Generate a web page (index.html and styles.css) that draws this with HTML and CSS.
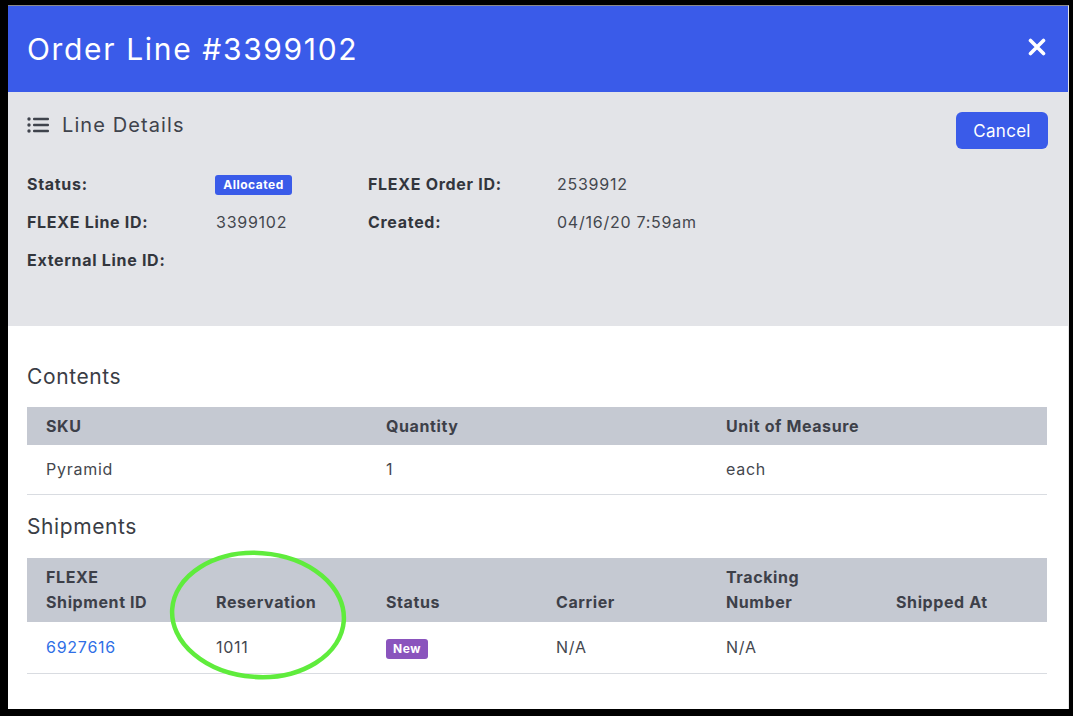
FILE: index.html
```html
<!DOCTYPE html>
<html lang="en">
<head>
  <meta charset="UTF-8" />
  <title>Order Line #3399102</title>
  <link rel="stylesheet" href="styles.css">
</head>
<body>
  <div class="frame">
    <div class="modal">
      <div class="modal-header">
        <h1>Order Line #3399102</h1>
        <button class="close" aria-label="Close">
          <svg width="18" height="18" viewBox="0 0 18 18">
            <path d="M2.5 2.5 L15.5 15.5 M15.5 2.5 L2.5 15.5" stroke="#fff" stroke-width="3.6" stroke-linecap="round"/>
          </svg>
        </button>
      </div>

      <div class="details">
        <div class="details-top">
          <h2 class="details-title">
            <svg width="22" height="16" viewBox="0 0 22 16">
              <circle cx="2" cy="2" r="1.7" fill="#3f434c"/>
              <circle cx="2" cy="8" r="1.7" fill="#3f434c"/>
              <circle cx="2" cy="14" r="1.7" fill="#3f434c"/>
              <rect x="6" y="0.8" width="16" height="2.4" rx="1" fill="#3f434c"/>
              <rect x="6" y="6.8" width="16" height="2.4" rx="1" fill="#3f434c"/>
              <rect x="6" y="12.8" width="16" height="2.4" rx="1" fill="#3f434c"/>
            </svg>
            Line Details
          </h2>
          <button class="btn">Cancel</button>
        </div>

        <div class="detail-grid">
          <div class="label">Status:</div>
          <div class="value"><span class="badge badge-blue">Allocated</span></div>
          <div class="label">FLEXE Order ID:</div>
          <div class="value">2539912</div>

          <div class="label">FLEXE Line ID:</div>
          <div class="value">3399102</div>
          <div class="label">Created:</div>
          <div class="value">04/16/20 7:59am</div>

          <div class="label">External Line ID:</div>
          <div class="value"></div>
          <div></div>
          <div></div>
        </div>
      </div>

      <div class="content">
        <h3>Contents</h3>
        <table class="grid three">
          <thead>
            <tr><th>SKU</th><th>Quantity</th><th>Unit of Measure</th></tr>
          </thead>
          <tbody>
            <tr><td>Pyramid</td><td>1</td><td>each</td></tr>
          </tbody>
        </table>

        <h3 class="ship-title">Shipments</h3>
        <div class="ship-wrap">
          <table class="grid six">
            <thead>
              <tr>
                <th>FLEXE<br>Shipment ID</th>
                <th>Reservation</th>
                <th>Status</th>
                <th>Carrier</th>
                <th>Tracking<br>Number</th>
                <th>Shipped At</th>
              </tr>
            </thead>
            <tbody>
              <tr>
                <td><a href="#">6927616</a></td>
                <td>1011</td>
                <td><span class="badge badge-purple">New</span></td>
                <td>N/A</td>
                <td>N/A</td>
                <td></td>
              </tr>
            </tbody>
          </table>
          <!-- highlight drawn over the reservation column -->
          <svg class="circle-mark" width="190" height="140" viewBox="0 0 190 140">
            <ellipse cx="95" cy="70" rx="86" ry="62" fill="none" stroke="#5fec3c" stroke-width="4.5" transform="rotate(4 95 70)"/>
          </svg>
        </div>
      </div>
    </div>
  </div>
</body>
</html>
```

FILE: styles.css
```css
body {
  margin: 0;
  background: #fff;
  font-family: Inter, 'Noto Sans', sans-serif;
}

.frame {
  width: 1073px;
  height: 716px;
  box-sizing: border-box;
  border-style: solid;
  border-color: #000;
  border-width: 5px 4px 7px 8px;
}

.modal {
  height: 100%;
  background: #fff;
  border-top: 1px solid #8a8a8a;
  border-right: 1px solid #e6e6e6;
  box-sizing: border-box;
  overflow: hidden;
}

.modal-header {
  height: 86px;
  background: #3a5be9;
  display: flex;
  align-items: center;
  justify-content: space-between;
  padding: 0 22px 0 19px;
}

.modal-header h1 {
  margin: 0;
  color: #fff;
  font-weight: 400;
  font-size: 30px;
  letter-spacing: 1.65px;
}

.close {
  background: none;
  border: none;
  padding: 0;
  margin-top: -4px;
  display: flex;
}

.details {
  background: #e3e4e8;
  padding: 20px 20px 47px 19px;
}

.details-top {
  display: flex;
  justify-content: space-between;
  align-items: flex-start;
}

.details-title {
  margin: 0;
  display: flex;
  align-items: center;
  gap: 13px;
  font-size: 20px;
  line-height: 26px;
  font-weight: 400;
  letter-spacing: 1.1px;
  color: #3f434c;
}

.btn {
  height: 37px;
  width: 92px;
  background: #3a5be9;
  color: #fff;
  border: none;
  border-radius: 6px;
  font-family: inherit;
  font-size: 17px;
  letter-spacing: 0.3px;
}

.detail-grid {
  margin-top: 16px;
  display: grid;
  grid-template-columns: 189px 152px 189px 1fr;
  grid-auto-rows: 38px;
  align-items: center;
}

.label {
  font-weight: 700;
  font-size: 16px;
  color: #33363d;
  letter-spacing: 0.7px;
}

.value {
  font-size: 16px;
  color: #44474e;
  letter-spacing: 0.75px;
}

.badge {
  display: inline-block;
  color: #fff;
  font-weight: 700;
  font-size: 12px;
  line-height: 20px;
  letter-spacing: 0.5px;
  border-radius: 3px;
  text-align: center;
}

.badge-blue {
  background: #3a5be9;
  width: 77px;
  margin-left: -1px;
}

.badge-purple {
  background: #8a54bd;
  width: 42px;
}

.content {
  padding: 37px 21px 0 19px;
}

.content h3 {
  margin: 0 0 16px;
  font-size: 21px;
  line-height: 28px;
  font-weight: 400;
  letter-spacing: 0.6px;
  color: #3a3d45;
}

.content .ship-title {
  margin-top: 1px;
  margin-bottom: 17px;
}

.grid {
  width: 100%;
  border-collapse: collapse;
  table-layout: fixed;
  margin-bottom: 18px;
}

.grid th {
  background: #c5c9d2;
  text-align: left;
  vertical-align: bottom;
  font-size: 16px;
  font-weight: 700;
  color: #3d4049;
  line-height: 25px;
  letter-spacing: 0.6px;
  padding: 7px 19px 6px;
}

.grid td {
  font-size: 16px;
  color: #44474e;
  line-height: 25px;
  letter-spacing: 0.75px;
  padding: 12px 19px 12px;
  border-bottom: 1px solid #d9dce1;
}

.six th {
  padding-bottom: 7px;
}

.six td {
  padding: 13px 19px 13px;
}

.grid a {
  color: #2f6fe6;
  text-decoration: none;
}

.ship-wrap {
  position: relative;
}

.circle-mark {
  position: absolute;
  left: 136px;
  top: -13px;
}
```
